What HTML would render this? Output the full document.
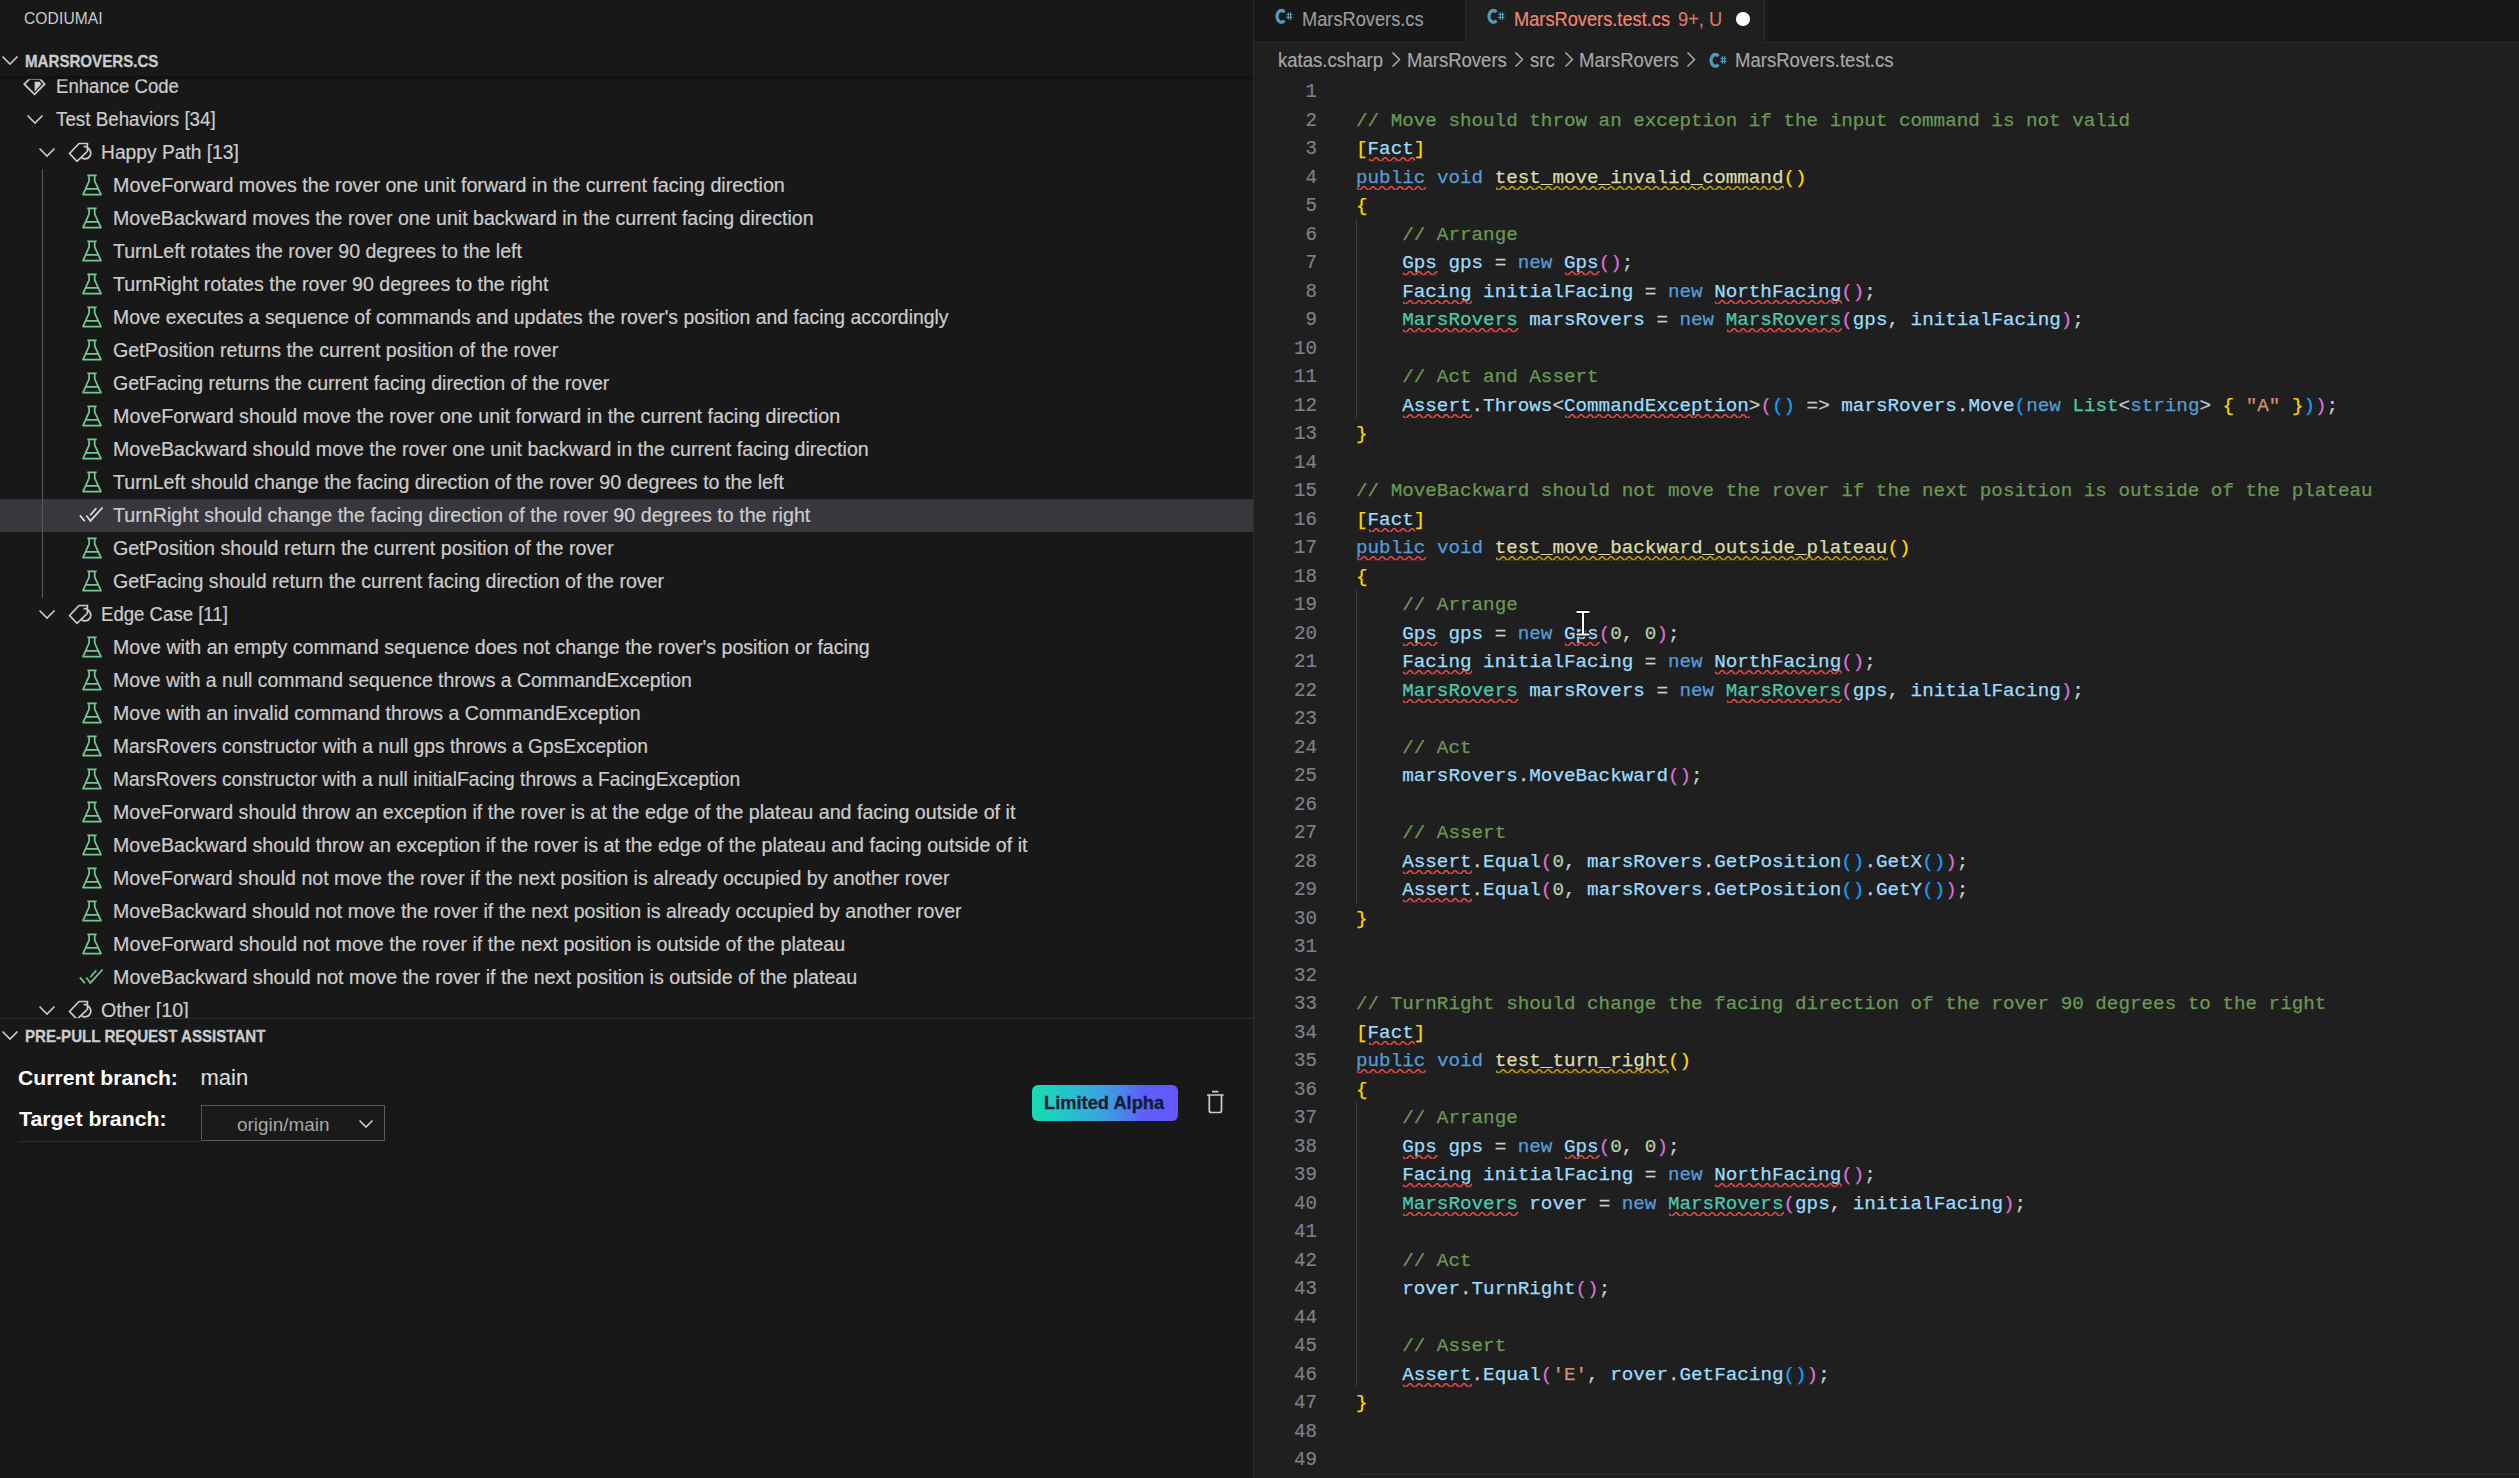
<!DOCTYPE html>
<html><head><meta charset="utf-8"><title>VS Code</title><style>
*{margin:0;padding:0;box-sizing:border-box}
html,body{width:2519px;height:1478px;overflow:hidden;background:#181818}
body{position:relative;font-family:"Liberation Sans",sans-serif;color:#cccccc}
.abs{position:absolute}
#side{position:absolute;left:0;top:0;width:1253px;height:1478px;background:#181818;overflow:hidden}
#sideborder{position:absolute;left:1253px;top:0;width:1px;height:1478px;background:#2b2b2b}
.title{position:absolute;left:24px;top:1px;height:43px;line-height:36px;font-size:15.6px;color:#cccccc;letter-spacing:0.1px}
.sechdr{position:absolute;left:0;width:1253px;height:33px;line-height:33px;font-size:15.1px;font-weight:700;color:#cccccc}
.sechdr span{position:absolute;left:24.5px;-webkit-text-stroke:0.3px currentColor;font-size:16.5px;transform:scaleX(0.915);transform-origin:0 50%}
.tree{position:absolute;left:0;top:76px;width:1253px;height:942px;overflow:hidden}
.shadow{position:absolute;left:0;top:76px;width:1253px;height:4px;background:linear-gradient(#111111 0%,#121212 60%,rgba(18,18,18,0) 100%)}
.row{position:absolute;left:0;width:1253px;height:33px;line-height:33px;font-size:19.5px;white-space:pre;color:#cccccc;-webkit-text-stroke:0.2px currentColor}
.row.sel{background:#37373d}
.row .tx{position:absolute;top:0}
.row svg{position:absolute;top:0}
.guide{position:absolute;left:42px;width:1px;background:#585858}
#editor{position:absolute;left:1254px;top:0;width:1265px;height:1478px;background:#1f1f1f;overflow:hidden}
.tabs{position:absolute;left:0;top:0;width:1265px;height:43px;background:#181818}
.tab{position:absolute;top:0.5px;-webkit-text-stroke:0.15px currentColor;height:42px;font-size:19.5px;line-height:36px;white-space:pre;transform:scaleX(0.935);transform-origin:0 0}
.crumbs{position:absolute;left:0;top:42px;width:1265px;height:34px;font-size:18.3px;line-height:34px;color:#a9a9a9;white-space:pre}
.crumbs span{position:absolute;top:0.5px;-webkit-text-stroke:0.15px currentColor;font-size:19.4px;transform:scaleX(0.955);transform-origin:0 0}
.ln{position:absolute;left:0;-webkit-text-stroke:0.2px currentColor;width:63px;text-align:right;font-family:"Liberation Mono",monospace;font-size:20.6px;color:#7c8188;transform:scaleX(0.93);transform-origin:100% 0}
.code{position:absolute;left:102px;-webkit-text-stroke:0.25px currentColor;font-family:"Liberation Mono",monospace;font-size:19.25px;white-space:pre;color:#cccccc}
.L{position:absolute;left:0;height:28.5px;line-height:28.5px;width:1265px}
.c{color:#6a9955}.k{color:#569cd6}.t{color:#4ec9b0}.v{color:#9cdcfe}.f{color:#dcdcaa}.n{color:#b5cea8}.s{color:#ce9178}
.b1{color:#ffd700}.b2{color:#da70d6}.b3{color:#179fff}
.e{}
.w{}
.ig{position:absolute;width:1px;background:#404040}
</style></head><body>
<div id="side">
<div class="title">CODIUMAI</div>
<div class="sechdr" style="top:43px"><svg class="abs" style="left:-2.5px;top:4.5px" width="24" height="24" viewBox="0 0 24 24"><path d="M4.5 8.5 L12 16 L19.5 8.5" fill="none" stroke="#cccccc" stroke-width="1.6"/></svg><span style="top:1.5px">MARSROVERS.CS</span></div>
<div class="tree">
<div class="row" style="top:-6.5px"><svg style="left:22px;top:4.5px" width="26" height="24" viewBox="0 0 26 24"><path d="M7.6 4.9 H18 L22.6 10.2 L12.5 20.3 L2.3 10.2 Z" fill="none" stroke="#cccccc" stroke-width="1.8" stroke-linejoin="miter"/><path d="M12.6 7.8 H17.8 L19.4 10.3 L12.6 17.4 Z" fill="#cccccc"/></svg><span class="tx" style="transform:scaleX(0.9528);transform-origin:0 0;left:56px">Enhance Code</span></div>
<div class="row" style="top:26.5px"><svg style="left:22.5px;top:4.5px" width="24" height="24" viewBox="0 0 24 24"><path d="M4.5 8.5 L12 16 L19.5 8.5" fill="none" stroke="#cccccc" stroke-width="1.6"/></svg><span class="tx" style="transform:scaleX(0.9632);transform-origin:0 0;left:56px">Test Behaviors [34]</span></div>
<div class="row" style="top:59.5px"><svg style="left:34.5px;top:4.5px" width="24" height="24" viewBox="0 0 24 24"><path d="M4.5 8.5 L12 16 L19.5 8.5" fill="none" stroke="#cccccc" stroke-width="1.6"/></svg><svg style="left:66px;top:4.5px" width="30" height="26" viewBox="0 0 30 26"><path d="M21.4 12.2 V3.5 H13 L3.6 13.5 L11 21.3 L20.6 12.2 M17.6 6.6 H21.4" fill="none" stroke="#cccccc" stroke-width="1.7" stroke-linejoin="miter"/><path d="M21.4 7.9 A5.7 5.7 0 1 1 15.7 17.7" fill="none" stroke="#cccccc" stroke-width="1.7"/></svg><span class="tx" style="transform:scaleX(0.9854);transform-origin:0 0;left:101px">Happy Path [13]</span></div>
<div class="row" style="top:92.5px"><svg style="left:79.5px;top:4.5px" width="24" height="24" viewBox="0 0 24 24"><path d="M7.3 2.3 H16.7 M9.1 2.3 V8.2 L3 21.6 H21 L14.7 8.2 V2.3 M5.6 15.9 H18.4" fill="none" stroke="#73c991" stroke-width="1.7" stroke-linejoin="round"/></svg><span class="tx" style="transform:scaleX(1.0095);transform-origin:0 0;left:113px">MoveForward moves the rover one unit forward in the current facing direction</span></div>
<div class="row" style="top:125.5px"><svg style="left:79.5px;top:4.5px" width="24" height="24" viewBox="0 0 24 24"><path d="M7.3 2.3 H16.7 M9.1 2.3 V8.2 L3 21.6 H21 L14.7 8.2 V2.3 M5.6 15.9 H18.4" fill="none" stroke="#73c991" stroke-width="1.7" stroke-linejoin="round"/></svg><span class="tx" style="transform:scaleX(1.0036);transform-origin:0 0;left:113px">MoveBackward moves the rover one unit backward in the current facing direction</span></div>
<div class="row" style="top:158.5px"><svg style="left:79.5px;top:4.5px" width="24" height="24" viewBox="0 0 24 24"><path d="M7.3 2.3 H16.7 M9.1 2.3 V8.2 L3 21.6 H21 L14.7 8.2 V2.3 M5.6 15.9 H18.4" fill="none" stroke="#73c991" stroke-width="1.7" stroke-linejoin="round"/></svg><span class="tx" style="transform:scaleX(1.0025);transform-origin:0 0;left:113px">TurnLeft rotates the rover 90 degrees to the left</span></div>
<div class="row" style="top:191.5px"><svg style="left:79.5px;top:4.5px" width="24" height="24" viewBox="0 0 24 24"><path d="M7.3 2.3 H16.7 M9.1 2.3 V8.2 L3 21.6 H21 L14.7 8.2 V2.3 M5.6 15.9 H18.4" fill="none" stroke="#73c991" stroke-width="1.7" stroke-linejoin="round"/></svg><span class="tx" style="transform:scaleX(1.0058);transform-origin:0 0;left:113px">TurnRight rotates the rover 90 degrees to the right</span></div>
<div class="row" style="top:224.5px"><svg style="left:79.5px;top:4.5px" width="24" height="24" viewBox="0 0 24 24"><path d="M7.3 2.3 H16.7 M9.1 2.3 V8.2 L3 21.6 H21 L14.7 8.2 V2.3 M5.6 15.9 H18.4" fill="none" stroke="#73c991" stroke-width="1.7" stroke-linejoin="round"/></svg><span class="tx" style="transform:scaleX(0.994);transform-origin:0 0;left:113px">Move executes a sequence of commands and updates the rover&#39;s position and facing accordingly</span></div>
<div class="row" style="top:257.5px"><svg style="left:79.5px;top:4.5px" width="24" height="24" viewBox="0 0 24 24"><path d="M7.3 2.3 H16.7 M9.1 2.3 V8.2 L3 21.6 H21 L14.7 8.2 V2.3 M5.6 15.9 H18.4" fill="none" stroke="#73c991" stroke-width="1.7" stroke-linejoin="round"/></svg><span class="tx" style="transform:scaleX(1.0068);transform-origin:0 0;left:113px">GetPosition returns the current position of the rover</span></div>
<div class="row" style="top:290.5px"><svg style="left:79.5px;top:4.5px" width="24" height="24" viewBox="0 0 24 24"><path d="M7.3 2.3 H16.7 M9.1 2.3 V8.2 L3 21.6 H21 L14.7 8.2 V2.3 M5.6 15.9 H18.4" fill="none" stroke="#73c991" stroke-width="1.7" stroke-linejoin="round"/></svg><span class="tx" style="transform:scaleX(1.002);transform-origin:0 0;left:113px">GetFacing returns the current facing direction of the rover</span></div>
<div class="row" style="top:323.5px"><svg style="left:79.5px;top:4.5px" width="24" height="24" viewBox="0 0 24 24"><path d="M7.3 2.3 H16.7 M9.1 2.3 V8.2 L3 21.6 H21 L14.7 8.2 V2.3 M5.6 15.9 H18.4" fill="none" stroke="#73c991" stroke-width="1.7" stroke-linejoin="round"/></svg><span class="tx" style="transform:scaleX(1.0119);transform-origin:0 0;left:113px">MoveForward should move the rover one unit forward in the current facing direction</span></div>
<div class="row" style="top:356.5px"><svg style="left:79.5px;top:4.5px" width="24" height="24" viewBox="0 0 24 24"><path d="M7.3 2.3 H16.7 M9.1 2.3 V8.2 L3 21.6 H21 L14.7 8.2 V2.3 M5.6 15.9 H18.4" fill="none" stroke="#73c991" stroke-width="1.7" stroke-linejoin="round"/></svg><span class="tx" style="transform:scaleX(1.0061);transform-origin:0 0;left:113px">MoveBackward should move the rover one unit backward in the current facing direction</span></div>
<div class="row" style="top:389.5px"><svg style="left:79.5px;top:4.5px" width="24" height="24" viewBox="0 0 24 24"><path d="M7.3 2.3 H16.7 M9.1 2.3 V8.2 L3 21.6 H21 L14.7 8.2 V2.3 M5.6 15.9 H18.4" fill="none" stroke="#73c991" stroke-width="1.7" stroke-linejoin="round"/></svg><span class="tx" style="transform:scaleX(1.0075);transform-origin:0 0;left:113px">TurnLeft should change the facing direction of the rover 90 degrees to the left</span></div>
<div class="row sel" style="top:422.5px"><svg style="left:76px;top:4.5px" width="30" height="24" viewBox="0 0 30 24"><path d="M3.9 12.4 L8.8 18.2 M10.3 12.6 L14.4 17.9 L26.6 4.5 M14.2 12.3 L20.3 5.3" fill="none" stroke="#e0e0e0" stroke-width="1.7"/></svg><span class="tx" style="transform:scaleX(1.0093);transform-origin:0 0;left:113px">TurnRight should change the facing direction of the rover 90 degrees to the right</span></div>
<div class="row" style="top:455.5px"><svg style="left:79.5px;top:4.5px" width="24" height="24" viewBox="0 0 24 24"><path d="M7.3 2.3 H16.7 M9.1 2.3 V8.2 L3 21.6 H21 L14.7 8.2 V2.3 M5.6 15.9 H18.4" fill="none" stroke="#73c991" stroke-width="1.7" stroke-linejoin="round"/></svg><span class="tx" style="transform:scaleX(1.0112);transform-origin:0 0;left:113px">GetPosition should return the current position of the rover</span></div>
<div class="row" style="top:488.5px"><svg style="left:79.5px;top:4.5px" width="24" height="24" viewBox="0 0 24 24"><path d="M7.3 2.3 H16.7 M9.1 2.3 V8.2 L3 21.6 H21 L14.7 8.2 V2.3 M5.6 15.9 H18.4" fill="none" stroke="#73c991" stroke-width="1.7" stroke-linejoin="round"/></svg><span class="tx" style="transform:scaleX(1.0048);transform-origin:0 0;left:113px">GetFacing should return the current facing direction of the rover</span></div>
<div class="row" style="top:521.5px"><svg style="left:34.5px;top:4.5px" width="24" height="24" viewBox="0 0 24 24"><path d="M4.5 8.5 L12 16 L19.5 8.5" fill="none" stroke="#cccccc" stroke-width="1.6"/></svg><svg style="left:66px;top:4.5px" width="30" height="26" viewBox="0 0 30 26"><path d="M21.4 12.2 V3.5 H13 L3.6 13.5 L11 21.3 L20.6 12.2 M17.6 6.6 H21.4" fill="none" stroke="#cccccc" stroke-width="1.7" stroke-linejoin="miter"/><path d="M21.4 7.9 A5.7 5.7 0 1 1 15.7 17.7" fill="none" stroke="#cccccc" stroke-width="1.7"/></svg><span class="tx" style="transform:scaleX(0.9538);transform-origin:0 0;left:101px">Edge Case [11]</span></div>
<div class="row" style="top:554.5px"><svg style="left:79.5px;top:4.5px" width="24" height="24" viewBox="0 0 24 24"><path d="M7.3 2.3 H16.7 M9.1 2.3 V8.2 L3 21.6 H21 L14.7 8.2 V2.3 M5.6 15.9 H18.4" fill="none" stroke="#73c991" stroke-width="1.7" stroke-linejoin="round"/></svg><span class="tx" style="transform:scaleX(1.0053);transform-origin:0 0;left:113px">Move with an empty command sequence does not change the rover&#39;s position or facing</span></div>
<div class="row" style="top:587.5px"><svg style="left:79.5px;top:4.5px" width="24" height="24" viewBox="0 0 24 24"><path d="M7.3 2.3 H16.7 M9.1 2.3 V8.2 L3 21.6 H21 L14.7 8.2 V2.3 M5.6 15.9 H18.4" fill="none" stroke="#73c991" stroke-width="1.7" stroke-linejoin="round"/></svg><span class="tx" style="transform:scaleX(0.9965);transform-origin:0 0;left:113px">Move with a null command sequence throws a CommandException</span></div>
<div class="row" style="top:620.5px"><svg style="left:79.5px;top:4.5px" width="24" height="24" viewBox="0 0 24 24"><path d="M7.3 2.3 H16.7 M9.1 2.3 V8.2 L3 21.6 H21 L14.7 8.2 V2.3 M5.6 15.9 H18.4" fill="none" stroke="#73c991" stroke-width="1.7" stroke-linejoin="round"/></svg><span class="tx" style="transform:scaleX(1.0019);transform-origin:0 0;left:113px">Move with an invalid command throws a CommandException</span></div>
<div class="row" style="top:653.5px"><svg style="left:79.5px;top:4.5px" width="24" height="24" viewBox="0 0 24 24"><path d="M7.3 2.3 H16.7 M9.1 2.3 V8.2 L3 21.6 H21 L14.7 8.2 V2.3 M5.6 15.9 H18.4" fill="none" stroke="#73c991" stroke-width="1.7" stroke-linejoin="round"/></svg><span class="tx" style="transform:scaleX(0.987);transform-origin:0 0;left:113px">MarsRovers constructor with a null gps throws a GpsException</span></div>
<div class="row" style="top:686.5px"><svg style="left:79.5px;top:4.5px" width="24" height="24" viewBox="0 0 24 24"><path d="M7.3 2.3 H16.7 M9.1 2.3 V8.2 L3 21.6 H21 L14.7 8.2 V2.3 M5.6 15.9 H18.4" fill="none" stroke="#73c991" stroke-width="1.7" stroke-linejoin="round"/></svg><span class="tx" style="transform:scaleX(0.9858);transform-origin:0 0;left:113px">MarsRovers constructor with a null initialFacing throws a FacingException</span></div>
<div class="row" style="top:719.5px"><svg style="left:79.5px;top:4.5px" width="24" height="24" viewBox="0 0 24 24"><path d="M7.3 2.3 H16.7 M9.1 2.3 V8.2 L3 21.6 H21 L14.7 8.2 V2.3 M5.6 15.9 H18.4" fill="none" stroke="#73c991" stroke-width="1.7" stroke-linejoin="round"/></svg><span class="tx" style="transform:scaleX(1.0078);transform-origin:0 0;left:113px">MoveForward should throw an exception if the rover is at the edge of the plateau and facing outside of it</span></div>
<div class="row" style="top:752.5px"><svg style="left:79.5px;top:4.5px" width="24" height="24" viewBox="0 0 24 24"><path d="M7.3 2.3 H16.7 M9.1 2.3 V8.2 L3 21.6 H21 L14.7 8.2 V2.3 M5.6 15.9 H18.4" fill="none" stroke="#73c991" stroke-width="1.7" stroke-linejoin="round"/></svg><span class="tx" style="transform:scaleX(1.0055);transform-origin:0 0;left:113px">MoveBackward should throw an exception if the rover is at the edge of the plateau and facing outside of it</span></div>
<div class="row" style="top:785.5px"><svg style="left:79.5px;top:4.5px" width="24" height="24" viewBox="0 0 24 24"><path d="M7.3 2.3 H16.7 M9.1 2.3 V8.2 L3 21.6 H21 L14.7 8.2 V2.3 M5.6 15.9 H18.4" fill="none" stroke="#73c991" stroke-width="1.7" stroke-linejoin="round"/></svg><span class="tx" style="transform:scaleX(1.0048);transform-origin:0 0;left:113px">MoveForward should not move the rover if the next position is already occupied by another rover</span></div>
<div class="row" style="top:818.5px"><svg style="left:79.5px;top:4.5px" width="24" height="24" viewBox="0 0 24 24"><path d="M7.3 2.3 H16.7 M9.1 2.3 V8.2 L3 21.6 H21 L14.7 8.2 V2.3 M5.6 15.9 H18.4" fill="none" stroke="#73c991" stroke-width="1.7" stroke-linejoin="round"/></svg><span class="tx" style="transform:scaleX(1.0024);transform-origin:0 0;left:113px">MoveBackward should not move the rover if the next position is already occupied by another rover</span></div>
<div class="row" style="top:851.5px"><svg style="left:79.5px;top:4.5px" width="24" height="24" viewBox="0 0 24 24"><path d="M7.3 2.3 H16.7 M9.1 2.3 V8.2 L3 21.6 H21 L14.7 8.2 V2.3 M5.6 15.9 H18.4" fill="none" stroke="#73c991" stroke-width="1.7" stroke-linejoin="round"/></svg><span class="tx" style="transform:scaleX(1.0111);transform-origin:0 0;left:113px">MoveForward should not move the rover if the next position is outside of the plateau</span></div>
<div class="row" style="top:884.5px"><svg style="left:76px;top:4.5px" width="30" height="24" viewBox="0 0 30 24"><path d="M3.9 12.4 L8.8 18.2 M10.3 12.6 L14.4 17.9 L26.6 4.5 M14.2 12.3 L20.3 5.3" fill="none" stroke="#73c991" stroke-width="1.7"/></svg><span class="tx" style="transform:scaleX(1.0082);transform-origin:0 0;left:113px">MoveBackward should not move the rover if the next position is outside of the plateau</span></div>
<div class="row" style="top:917.5px"><svg style="left:34.5px;top:4.5px" width="24" height="24" viewBox="0 0 24 24"><path d="M4.5 8.5 L12 16 L19.5 8.5" fill="none" stroke="#cccccc" stroke-width="1.6"/></svg><svg style="left:66px;top:4.5px" width="30" height="26" viewBox="0 0 30 26"><path d="M21.4 12.2 V3.5 H13 L3.6 13.5 L11 21.3 L20.6 12.2 M17.6 6.6 H21.4" fill="none" stroke="#cccccc" stroke-width="1.7" stroke-linejoin="miter"/><path d="M21.4 7.9 A5.7 5.7 0 1 1 15.7 17.7" fill="none" stroke="#cccccc" stroke-width="1.7"/></svg><span class="tx" style="transform:scaleX(1.0119);transform-origin:0 0;left:101px">Other [10]</span></div>
<div class="guide" style="top:92.5px;height:429px"></div>
</div>
<div class="shadow"></div>
<div class="abs" style="left:0;top:1018px;width:1253px;height:1px;background:#2b2b2b"></div>
<div class="sechdr" style="top:1019px"><svg class="abs" style="left:-2.5px;top:3.5px" width="24" height="24" viewBox="0 0 24 24"><path d="M4.5 8.5 L12 16 L19.5 8.5" fill="none" stroke="#cccccc" stroke-width="1.6"/></svg><span style="top:1px">PRE-PULL REQUEST ASSISTANT</span></div>

<div class="abs" style="left:18px;top:1063px;font-size:20.9px;font-weight:700;color:#ffffff;line-height:30px;white-space:pre;transform:scaleX(1.013);transform-origin:0 0">Current branch:</div>
<div class="abs" style="left:200.5px;top:1063px;font-size:22px;color:#e0e0e0;line-height:30px;white-space:pre">main</div>
<div class="abs" style="left:18.5px;top:1104px;font-size:21px;font-weight:700;color:#ffffff;line-height:30px;white-space:pre;transform:scaleX(1.015);transform-origin:0 0">Target branch:</div>
<div class="abs" style="left:18px;top:1141px;width:183px;height:1px;background:#2e2e2e"></div>
<div class="abs" style="left:201px;top:1105px;width:184px;height:36px;border:1px solid #5a5a5a;background:#1a1a1a"></div>
<div class="abs" style="left:237px;top:1109.5px;font-size:18.9px;color:#a8a8a8;line-height:30px;white-space:pre">origin/main</div>
<svg class="abs" style="left:354px;top:1112px" width="24" height="24" viewBox="0 0 24 24"><path d="M5.5 8.5 L12 15 L18.5 8.5" fill="none" stroke="#c8c8c8" stroke-width="1.7"/></svg>
<div class="abs" style="left:1032px;top:1085px;width:146px;height:36px;border-radius:6px;background:linear-gradient(90deg,#17dcb2 0%,#25c2cc 25%,#38a4df 48%,#4a86ea 62%,#5c5ff6 75%,#6257fb 100%)"></div>
<div class="abs" style="left:1044px;top:1085px;font-size:18.3px;font-weight:700;color:#121c33;line-height:36px;-webkit-text-stroke:0.3px #121c33;white-space:pre">Limited Alpha</div>
<svg class="abs" style="left:1203px;top:1089px" width="24" height="26" viewBox="0 0 24 26"><path d="M4 6 H20.7 M9 2.6 H15.5 M6.3 6 V21.5 Q6.3 23.5 8.3 23.5 H16.5 Q18.5 23.5 18.5 21.5 V6" fill="none" stroke="#cccccc" stroke-width="1.7"/></svg>

</div>
<div id="sideborder"></div>
<div id="editor">
<div class="tabs"></div>
<div class="abs" style="left:0;top:42px;width:211px;height:1px;background:#2b2b2b"></div>
<div class="abs" style="left:510px;top:42px;width:755px;height:1px;background:#2b2b2b"></div>
<div class="abs" style="left:211px;top:0;width:1px;height:43px;background:#2b2b2b"></div>
<div class="abs" style="left:212px;top:0;width:298px;height:43px;background:#1f1f1f"></div>
<div class="abs" style="left:510px;top:0;width:1px;height:43px;background:#2b2b2b"></div>
<svg class="abs" style="left:20.5px;top:8px" width="22" height="18" viewBox="0 0 22 18"><path d="M9.4 4.2 A4.3 5.9 0 1 0 9.4 12.6" fill="none" stroke="#519aba" stroke-width="3.3"/><path d="M13.3 4.2 V11.8 M15.6 4.2 V11.8 M11.4 6.5 H17.4 M11.4 9.3 H17.4" fill="none" stroke="#519aba" stroke-width="1.2"/></svg>
<div class="tab" style="left:48px;color:#9d9d9d">MarsRovers.cs</div>
<svg class="abs" style="left:233px;top:8px" width="22" height="18" viewBox="0 0 22 18"><path d="M9.4 4.2 A4.3 5.9 0 1 0 9.4 12.6" fill="none" stroke="#519aba" stroke-width="3.3"/><path d="M13.3 4.2 V11.8 M15.6 4.2 V11.8 M11.4 6.5 H17.4 M11.4 9.3 H17.4" fill="none" stroke="#519aba" stroke-width="1.2"/></svg>
<div class="tab" style="left:260px;color:#f38774">MarsRovers.test.cs</div><div class="tab" style="left:424px;color:#d97a6c">9+, U</div>
<div class="abs" style="left:482px;top:12px;width:13.5px;height:13.5px;border-radius:50%;background:#ffffff"></div>
<div class="crumbs">
<span style="left:24px">katas.csharp</span>
<span style="left:153px">MarsRovers</span>
<span style="left:276px">src</span>
<span style="left:325px">MarsRovers</span>
<span style="left:481px">MarsRovers.test.cs</span>
</div>
<svg class="abs" style="left:136px;top:51px" width="12" height="18" viewBox="0 0 12 18"><path d="M2.5 1.5 L9.5 8.5 L2.5 15.5" fill="none" stroke="#a9a9a9" stroke-width="1.5"/></svg>
<svg class="abs" style="left:259px;top:51px" width="12" height="18" viewBox="0 0 12 18"><path d="M2.5 1.5 L9.5 8.5 L2.5 15.5" fill="none" stroke="#a9a9a9" stroke-width="1.5"/></svg>
<svg class="abs" style="left:309px;top:51px" width="12" height="18" viewBox="0 0 12 18"><path d="M2.5 1.5 L9.5 8.5 L2.5 15.5" fill="none" stroke="#a9a9a9" stroke-width="1.5"/></svg>
<svg class="abs" style="left:431px;top:51px" width="12" height="18" viewBox="0 0 12 18"><path d="M2.5 1.5 L9.5 8.5 L2.5 15.5" fill="none" stroke="#a9a9a9" stroke-width="1.5"/></svg>
<svg class="abs" style="left:455px;top:51.5px" width="22" height="18" viewBox="0 0 22 18"><path d="M9.4 4.2 A4.3 5.9 0 1 0 9.4 12.6" fill="none" stroke="#519aba" stroke-width="3.3"/><path d="M13.3 4.2 V11.8 M15.6 4.2 V11.8 M11.4 6.5 H17.4 M11.4 9.3 H17.4" fill="none" stroke="#519aba" stroke-width="1.2"/></svg>
<div class="ln" style="top:78.0px;height:28.5px;line-height:28.5px">1</div>
<div class="ln" style="top:106.5px;height:28.5px;line-height:28.5px">2</div>
<div class="ln" style="top:135.0px;height:28.5px;line-height:28.5px">3</div>
<div class="ln" style="top:163.5px;height:28.5px;line-height:28.5px">4</div>
<div class="ln" style="top:192.0px;height:28.5px;line-height:28.5px">5</div>
<div class="ln" style="top:220.5px;height:28.5px;line-height:28.5px">6</div>
<div class="ln" style="top:249.0px;height:28.5px;line-height:28.5px">7</div>
<div class="ln" style="top:277.5px;height:28.5px;line-height:28.5px">8</div>
<div class="ln" style="top:306.0px;height:28.5px;line-height:28.5px">9</div>
<div class="ln" style="top:334.5px;height:28.5px;line-height:28.5px">10</div>
<div class="ln" style="top:363.0px;height:28.5px;line-height:28.5px">11</div>
<div class="ln" style="top:391.5px;height:28.5px;line-height:28.5px">12</div>
<div class="ln" style="top:420.0px;height:28.5px;line-height:28.5px">13</div>
<div class="ln" style="top:448.5px;height:28.5px;line-height:28.5px">14</div>
<div class="ln" style="top:477.0px;height:28.5px;line-height:28.5px">15</div>
<div class="ln" style="top:505.5px;height:28.5px;line-height:28.5px">16</div>
<div class="ln" style="top:534.0px;height:28.5px;line-height:28.5px">17</div>
<div class="ln" style="top:562.5px;height:28.5px;line-height:28.5px">18</div>
<div class="ln" style="top:591.0px;height:28.5px;line-height:28.5px">19</div>
<div class="ln" style="top:619.5px;height:28.5px;line-height:28.5px">20</div>
<div class="ln" style="top:648.0px;height:28.5px;line-height:28.5px">21</div>
<div class="ln" style="top:676.5px;height:28.5px;line-height:28.5px">22</div>
<div class="ln" style="top:705.0px;height:28.5px;line-height:28.5px">23</div>
<div class="ln" style="top:733.5px;height:28.5px;line-height:28.5px">24</div>
<div class="ln" style="top:762.0px;height:28.5px;line-height:28.5px">25</div>
<div class="ln" style="top:790.5px;height:28.5px;line-height:28.5px">26</div>
<div class="ln" style="top:819.0px;height:28.5px;line-height:28.5px">27</div>
<div class="ln" style="top:847.5px;height:28.5px;line-height:28.5px">28</div>
<div class="ln" style="top:876.0px;height:28.5px;line-height:28.5px">29</div>
<div class="ln" style="top:904.5px;height:28.5px;line-height:28.5px">30</div>
<div class="ln" style="top:933.0px;height:28.5px;line-height:28.5px">31</div>
<div class="ln" style="top:961.5px;height:28.5px;line-height:28.5px">32</div>
<div class="ln" style="top:990.0px;height:28.5px;line-height:28.5px">33</div>
<div class="ln" style="top:1018.5px;height:28.5px;line-height:28.5px">34</div>
<div class="ln" style="top:1047.0px;height:28.5px;line-height:28.5px">35</div>
<div class="ln" style="top:1075.5px;height:28.5px;line-height:28.5px">36</div>
<div class="ln" style="top:1104.0px;height:28.5px;line-height:28.5px">37</div>
<div class="ln" style="top:1132.5px;height:28.5px;line-height:28.5px">38</div>
<div class="ln" style="top:1161.0px;height:28.5px;line-height:28.5px">39</div>
<div class="ln" style="top:1189.5px;height:28.5px;line-height:28.5px">40</div>
<div class="ln" style="top:1218.0px;height:28.5px;line-height:28.5px">41</div>
<div class="ln" style="top:1246.5px;height:28.5px;line-height:28.5px">42</div>
<div class="ln" style="top:1275.0px;height:28.5px;line-height:28.5px">43</div>
<div class="ln" style="top:1303.5px;height:28.5px;line-height:28.5px">44</div>
<div class="ln" style="top:1332.0px;height:28.5px;line-height:28.5px">45</div>
<div class="ln" style="top:1360.5px;height:28.5px;line-height:28.5px">46</div>
<div class="ln" style="top:1389.0px;height:28.5px;line-height:28.5px">47</div>
<div class="ln" style="top:1417.5px;height:28.5px;line-height:28.5px">48</div>
<div class="ln" style="top:1446.0px;height:28.5px;line-height:28.5px">49</div>
<div class="code" style="top:0;width:1160px;height:1478px">
<div class="L" style="top:78.0px"></div>
<div class="L" style="top:106.5px"><span class="c">// Move should throw an exception if the input command is not valid</span></div>
<div class="L" style="top:135.0px"><span class="b1">[</span><span class="v e">Fact</span><span class="b1">]</span></div>
<div class="L" style="top:163.5px"><span class="k e">public</span> <span class="k">void</span> <span class="f w">test_move_invalid_command</span><span class="b1">(</span><span class="b1">)</span></div>
<div class="L" style="top:192.0px"><span class="b1">{</span></div>
<div class="L" style="top:220.5px">    <span class="c">// Arrange</span></div>
<div class="L" style="top:249.0px">    <span class="v e">Gps</span> <span class="v">gps</span> = <span class="k">new</span> <span class="v e">Gps</span><span class="b2">(</span><span class="b2">)</span>;</div>
<div class="L" style="top:277.5px">    <span class="v e">Facing</span> <span class="v">initialFacing</span> = <span class="k">new</span> <span class="v e">NorthFacing</span><span class="b2">(</span><span class="b2">)</span>;</div>
<div class="L" style="top:306.0px">    <span class="t e">MarsRovers</span> <span class="v">marsRovers</span> = <span class="k">new</span> <span class="t e">MarsRovers</span><span class="b2">(</span><span class="v">gps</span>, <span class="v">initialFacing</span><span class="b2">)</span>;</div>
<div class="L" style="top:334.5px"></div>
<div class="L" style="top:363.0px">    <span class="c">// Act and Assert</span></div>
<div class="L" style="top:391.5px">    <span class="v e">Assert</span>.<span class="v">Throws</span>&lt;<span class="v e">CommandException</span>&gt;<span class="b2">(</span><span class="b3">(</span><span class="b3">)</span> =&gt; <span class="v">marsRovers</span>.<span class="v">Move</span><span class="b3">(</span><span class="k">new</span> <span class="t">List</span>&lt;<span class="k">string</span>&gt; <span class="b1">{</span> <span class="s">"A"</span> <span class="b1">}</span><span class="b3">)</span><span class="b2">)</span>;</div>
<div class="L" style="top:420.0px"><span class="b1">}</span></div>
<div class="L" style="top:448.5px"></div>
<div class="L" style="top:477.0px"><span class="c">// MoveBackward should not move the rover if the next position is outside of the plateau</span></div>
<div class="L" style="top:505.5px"><span class="b1">[</span><span class="v e">Fact</span><span class="b1">]</span></div>
<div class="L" style="top:534.0px"><span class="k e">public</span> <span class="k">void</span> <span class="f w">test_move_backward_outside_plateau</span><span class="b1">(</span><span class="b1">)</span></div>
<div class="L" style="top:562.5px"><span class="b1">{</span></div>
<div class="L" style="top:591.0px">    <span class="c">// Arrange</span></div>
<div class="L" style="top:619.5px">    <span class="v e">Gps</span> <span class="v">gps</span> = <span class="k">new</span> <span class="v e">Gps</span><span class="b2">(</span><span class="n">0</span>, <span class="n">0</span><span class="b2">)</span>;</div>
<div class="L" style="top:648.0px">    <span class="v e">Facing</span> <span class="v">initialFacing</span> = <span class="k">new</span> <span class="v e">NorthFacing</span><span class="b2">(</span><span class="b2">)</span>;</div>
<div class="L" style="top:676.5px">    <span class="t e">MarsRovers</span> <span class="v">marsRovers</span> = <span class="k">new</span> <span class="t e">MarsRovers</span><span class="b2">(</span><span class="v">gps</span>, <span class="v">initialFacing</span><span class="b2">)</span>;</div>
<div class="L" style="top:705.0px"></div>
<div class="L" style="top:733.5px">    <span class="c">// Act</span></div>
<div class="L" style="top:762.0px">    <span class="v">marsRovers</span>.<span class="v">MoveBackward</span><span class="b2">(</span><span class="b2">)</span>;</div>
<div class="L" style="top:790.5px"></div>
<div class="L" style="top:819.0px">    <span class="c">// Assert</span></div>
<div class="L" style="top:847.5px">    <span class="v e">Assert</span>.<span class="v">Equal</span><span class="b2">(</span><span class="n">0</span>, <span class="v">marsRovers</span>.<span class="v">GetPosition</span><span class="b3">(</span><span class="b3">)</span>.<span class="v">GetX</span><span class="b3">(</span><span class="b3">)</span><span class="b2">)</span>;</div>
<div class="L" style="top:876.0px">    <span class="v e">Assert</span>.<span class="v">Equal</span><span class="b2">(</span><span class="n">0</span>, <span class="v">marsRovers</span>.<span class="v">GetPosition</span><span class="b3">(</span><span class="b3">)</span>.<span class="v">GetY</span><span class="b3">(</span><span class="b3">)</span><span class="b2">)</span>;</div>
<div class="L" style="top:904.5px"><span class="b1">}</span></div>
<div class="L" style="top:933.0px"></div>
<div class="L" style="top:961.5px"></div>
<div class="L" style="top:990.0px"><span class="c">// TurnRight should change the facing direction of the rover 90 degrees to the right</span></div>
<div class="L" style="top:1018.5px"><span class="b1">[</span><span class="v e">Fact</span><span class="b1">]</span></div>
<div class="L" style="top:1047.0px"><span class="k e">public</span> <span class="k">void</span> <span class="f w">test_turn_right</span><span class="b1">(</span><span class="b1">)</span></div>
<div class="L" style="top:1075.5px"><span class="b1">{</span></div>
<div class="L" style="top:1104.0px">    <span class="c">// Arrange</span></div>
<div class="L" style="top:1132.5px">    <span class="v e">Gps</span> <span class="v">gps</span> = <span class="k">new</span> <span class="v e">Gps</span><span class="b2">(</span><span class="n">0</span>, <span class="n">0</span><span class="b2">)</span>;</div>
<div class="L" style="top:1161.0px">    <span class="v e">Facing</span> <span class="v">initialFacing</span> = <span class="k">new</span> <span class="v e">NorthFacing</span><span class="b2">(</span><span class="b2">)</span>;</div>
<div class="L" style="top:1189.5px">    <span class="t e">MarsRovers</span> <span class="v">rover</span> = <span class="k">new</span> <span class="t e">MarsRovers</span><span class="b2">(</span><span class="v">gps</span>, <span class="v">initialFacing</span><span class="b2">)</span>;</div>
<div class="L" style="top:1218.0px"></div>
<div class="L" style="top:1246.5px">    <span class="c">// Act</span></div>
<div class="L" style="top:1275.0px">    <span class="v">rover</span>.<span class="v">TurnRight</span><span class="b2">(</span><span class="b2">)</span>;</div>
<div class="L" style="top:1303.5px"></div>
<div class="L" style="top:1332.0px">    <span class="c">// Assert</span></div>
<div class="L" style="top:1360.5px">    <span class="v e">Assert</span>.<span class="v">Equal</span><span class="b2">(</span><span class="s">'E'</span>, <span class="v">rover</span>.<span class="v">GetFacing</span><span class="b3">(</span><span class="b3">)</span><span class="b2">)</span>;</div>
<div class="L" style="top:1389.0px"><span class="b1">}</span></div>
<div class="L" style="top:1417.5px"></div>
<div class="L" style="top:1446.0px"></div>
</div>
<svg class="abs" style="left:0;top:0" width="0" height="0"><defs><pattern id="sqE" x="0" y="0" width="9" height="4.5" patternUnits="userSpaceOnUse"><g fill="#f14c4c"><polygon points="8.25,0 3.75,4.5 1.65,4.5 6.15,0"/><polygon points="6,0 9,3 9,0.9 8.1,0"/><polygon points="0,3 1.5,4.5 3.6,4.5 0,0.9"/></g></pattern><pattern id="sqW" x="0" y="0" width="9" height="4.5" patternUnits="userSpaceOnUse"><g fill="#cca700"><polygon points="8.25,0 3.75,4.5 1.65,4.5 6.15,0"/><polygon points="6,0 9,3 9,0.9 8.1,0"/><polygon points="0,3 1.5,4.5 3.6,4.5 0,0.9"/></g></pattern></defs></svg>
<svg class="abs" style="left:114.55px;top:157.0px" width="46.20" height="4.5"><rect width="100%" height="4.5" fill="url(#sqE)"/></svg>
<svg class="abs" style="left:103.00px;top:185.5px" width="69.30" height="4.5"><rect width="100%" height="4.5" fill="url(#sqE)"/></svg>
<svg class="abs" style="left:241.60px;top:185.5px" width="288.75" height="4.5"><rect width="100%" height="4.5" fill="url(#sqW)"/></svg>
<svg class="abs" style="left:149.20px;top:271.0px" width="34.65" height="4.5"><rect width="100%" height="4.5" fill="url(#sqE)"/></svg>
<svg class="abs" style="left:310.90px;top:271.0px" width="34.65" height="4.5"><rect width="100%" height="4.5" fill="url(#sqE)"/></svg>
<svg class="abs" style="left:149.20px;top:299.5px" width="69.30" height="4.5"><rect width="100%" height="4.5" fill="url(#sqE)"/></svg>
<svg class="abs" style="left:461.05px;top:299.5px" width="127.05" height="4.5"><rect width="100%" height="4.5" fill="url(#sqE)"/></svg>
<svg class="abs" style="left:149.20px;top:328.0px" width="115.50" height="4.5"><rect width="100%" height="4.5" fill="url(#sqE)"/></svg>
<svg class="abs" style="left:472.60px;top:328.0px" width="115.50" height="4.5"><rect width="100%" height="4.5" fill="url(#sqE)"/></svg>
<svg class="abs" style="left:149.20px;top:413.5px" width="69.30" height="4.5"><rect width="100%" height="4.5" fill="url(#sqE)"/></svg>
<svg class="abs" style="left:310.90px;top:413.5px" width="184.80" height="4.5"><rect width="100%" height="4.5" fill="url(#sqE)"/></svg>
<svg class="abs" style="left:114.55px;top:527.5px" width="46.20" height="4.5"><rect width="100%" height="4.5" fill="url(#sqE)"/></svg>
<svg class="abs" style="left:103.00px;top:556.0px" width="69.30" height="4.5"><rect width="100%" height="4.5" fill="url(#sqE)"/></svg>
<svg class="abs" style="left:241.60px;top:556.0px" width="392.70" height="4.5"><rect width="100%" height="4.5" fill="url(#sqW)"/></svg>
<svg class="abs" style="left:149.20px;top:641.5px" width="34.65" height="4.5"><rect width="100%" height="4.5" fill="url(#sqE)"/></svg>
<svg class="abs" style="left:310.90px;top:641.5px" width="34.65" height="4.5"><rect width="100%" height="4.5" fill="url(#sqE)"/></svg>
<svg class="abs" style="left:149.20px;top:670.0px" width="69.30" height="4.5"><rect width="100%" height="4.5" fill="url(#sqE)"/></svg>
<svg class="abs" style="left:461.05px;top:670.0px" width="127.05" height="4.5"><rect width="100%" height="4.5" fill="url(#sqE)"/></svg>
<svg class="abs" style="left:149.20px;top:698.5px" width="115.50" height="4.5"><rect width="100%" height="4.5" fill="url(#sqE)"/></svg>
<svg class="abs" style="left:472.60px;top:698.5px" width="115.50" height="4.5"><rect width="100%" height="4.5" fill="url(#sqE)"/></svg>
<svg class="abs" style="left:149.20px;top:869.5px" width="69.30" height="4.5"><rect width="100%" height="4.5" fill="url(#sqE)"/></svg>
<svg class="abs" style="left:149.20px;top:898.0px" width="69.30" height="4.5"><rect width="100%" height="4.5" fill="url(#sqE)"/></svg>
<svg class="abs" style="left:114.55px;top:1040.5px" width="46.20" height="4.5"><rect width="100%" height="4.5" fill="url(#sqE)"/></svg>
<svg class="abs" style="left:103.00px;top:1069.0px" width="69.30" height="4.5"><rect width="100%" height="4.5" fill="url(#sqE)"/></svg>
<svg class="abs" style="left:241.60px;top:1069.0px" width="173.25" height="4.5"><rect width="100%" height="4.5" fill="url(#sqW)"/></svg>
<svg class="abs" style="left:149.20px;top:1154.5px" width="34.65" height="4.5"><rect width="100%" height="4.5" fill="url(#sqE)"/></svg>
<svg class="abs" style="left:310.90px;top:1154.5px" width="34.65" height="4.5"><rect width="100%" height="4.5" fill="url(#sqE)"/></svg>
<svg class="abs" style="left:149.20px;top:1183.0px" width="69.30" height="4.5"><rect width="100%" height="4.5" fill="url(#sqE)"/></svg>
<svg class="abs" style="left:461.05px;top:1183.0px" width="127.05" height="4.5"><rect width="100%" height="4.5" fill="url(#sqE)"/></svg>
<svg class="abs" style="left:149.20px;top:1211.5px" width="115.50" height="4.5"><rect width="100%" height="4.5" fill="url(#sqE)"/></svg>
<svg class="abs" style="left:414.85px;top:1211.5px" width="115.50" height="4.5"><rect width="100%" height="4.5" fill="url(#sqE)"/></svg>
<svg class="abs" style="left:149.20px;top:1382.5px" width="69.30" height="4.5"><rect width="100%" height="4.5" fill="url(#sqE)"/></svg>
<div class="ig" style="left:102px;top:218.5px;height:199.5px"></div>
<div class="ig" style="left:102px;top:589.0px;height:313.5px"></div>
<div class="ig" style="left:102px;top:1102.0px;height:285.0px"></div>
<div class="abs" style="left:102px;top:1474px;width:1163px;height:1px;background:#2b2b2b"></div>
<svg class="abs" style="left:318px;top:606px" width="24" height="34" viewBox="0 0 24 34"><path d="M4 6 H18 M11 6 V28.5 M4 28.5 H18" fill="none" stroke="#000" stroke-width="4"/><path d="M4.5 6 H17.5 M11 6 V28.5 M4.5 28.5 H17.5" fill="none" stroke="#fff" stroke-width="2.2"/></svg>
</div>
</body></html>
